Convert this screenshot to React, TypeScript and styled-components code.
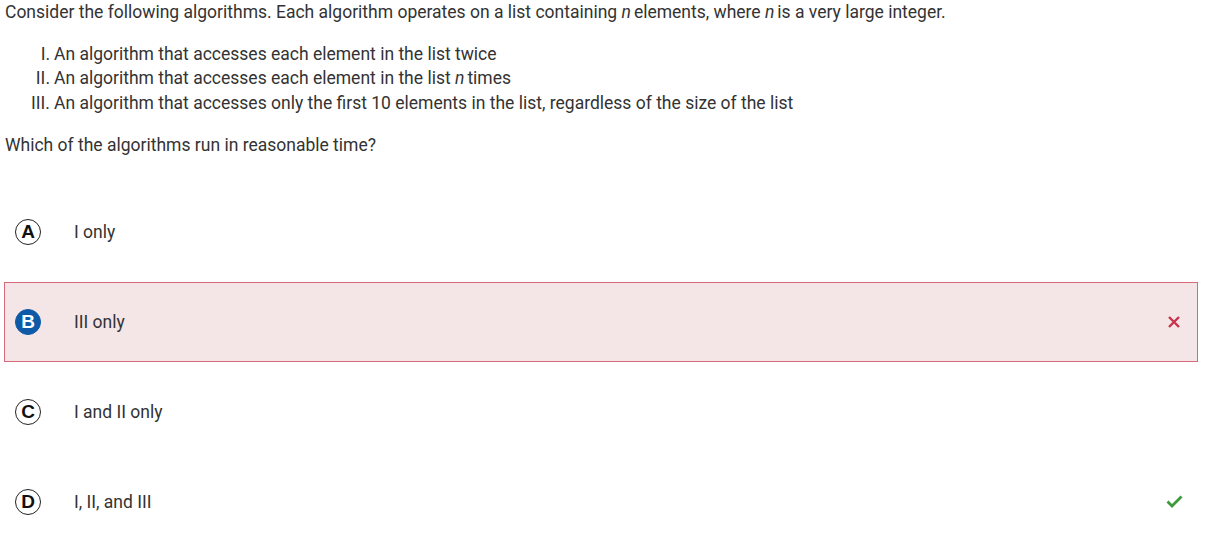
import React from "react";
import styled, { createGlobalStyle } from "styled-components";

const Global = createGlobalStyle`
  html, body { margin: 0; padding: 0; background: #fff; }
  body { font-family: Roboto, "Noto Sans", sans-serif; color: #333; }
`;

const Page = styled.div`
  padding: 1px 14px 0 4px;
  width: 1212px;
  box-sizing: border-box;
`;

const Stem = styled.p`
  margin: 0 0 0 1px;
  font-size: 17.5px;
  line-height: 22px;
`;

const RomanList = styled.div`
  margin: 18.5px 0 0 0;
  display: grid;
  grid-template-columns: 50px 1fr;
  font-size: 17.5px;
  line-height: 24.5px;
`;

const Numeral = styled.span`
  text-align: right;
  padding-right: 4px;
`;

const Question = styled.p`
  margin: 18.5px 0 0 1px;
  font-size: 17.5px;
  line-height: 22px;
`;

const Options = styled.div`
  margin-top: 36px;
  display: flex;
  flex-direction: column;
  gap: 10px;
`;

const Row = styled.div<{ $wrong?: boolean }>`
  height: 80px;
  box-sizing: border-box;
  display: flex;
  align-items: center;
  padding: 0 12px 0 10px;
  border: 1px solid ${(p) => (p.$wrong ? "#d96a7b" : "transparent")};
  background: ${(p) => (p.$wrong ? "#f4e6e7" : "transparent")};
`;

const Letter = styled.span<{ $selected?: boolean }>`
  width: 26px;
  height: 26px;
  box-sizing: border-box;
  border-radius: 50%;
  border: 1.5px solid ${(p) => (p.$selected ? "#0e5aa7" : "#222")};
  background: ${(p) => (p.$selected ? "#0e5aa7" : "#fff")};
  color: ${(p) => (p.$selected ? "#fff" : "#111")};
  display: inline-flex;
  align-items: center;
  justify-content: center;
  font-family: "Liberation Sans", Arial, sans-serif;
  font-weight: 700;
  font-size: 19px;
  line-height: 1;
  flex: none;
`;

const Label = styled.span`
  margin-left: 33px;
  font-size: 17.5px;
  flex: 1;
`;

const Mark = styled.span`
  width: 22px;
  display: inline-flex;
  justify-content: center;
  flex: none;
`;

const Cross = () => (
  <svg width="14" height="14" viewBox="0 0 14 14">
    <path d="M2 2 L12 12 M12 2 L2 12" stroke="#c8334c" strokeWidth="2.4" strokeLinecap="butt" />
  </svg>
);

const Check = () => (
  <svg width="17" height="13" viewBox="0 0 17 13">
    <path d="M1.5 6.5 L6 11 L15.5 1.5" stroke="#3d9a3a" strokeWidth="2.8" fill="none" />
  </svg>
);

const Ital = styled.i`
  font-style: italic;
  margin-right: 3px;
`;

export default function App() {
  const opts = [
    { l: "A", t: "I only" },
    { l: "B", t: "III only", selected: true, wrong: true },
    { l: "C", t: "I and II only" },
    { l: "D", t: "I, II, and III", correct: true },
  ];
  return (
    <>
      <Global />
      <Page>
        <Stem>
          Consider the following algorithms. Each algorithm operates on a list containing <Ital>n</Ital>elements, where <Ital>n</Ital>is a very large integer.
        </Stem>
        <RomanList>
          <Numeral>I.</Numeral>
          <span>An algorithm that accesses each element in the list twice</span>
          <Numeral>II.</Numeral>
          <span>
            An algorithm that accesses each element in the list <Ital>n</Ital>times
          </span>
          <Numeral>III.</Numeral>
          <span>An algorithm that accesses only the first 10 elements in the list, regardless of the size of the list</span>
        </RomanList>
        <Question>Which of the algorithms run in reasonable time?</Question>
        <Options>
          {opts.map((o) => (
            <Row key={o.l} $wrong={o.wrong}>
              <Letter $selected={o.selected}>{o.l}</Letter>
              <Label>{o.t}</Label>
              <Mark>{o.wrong ? <Cross /> : o.correct ? <Check /> : null}</Mark>
            </Row>
          ))}
        </Options>
      </Page>
    </>
  );
}
